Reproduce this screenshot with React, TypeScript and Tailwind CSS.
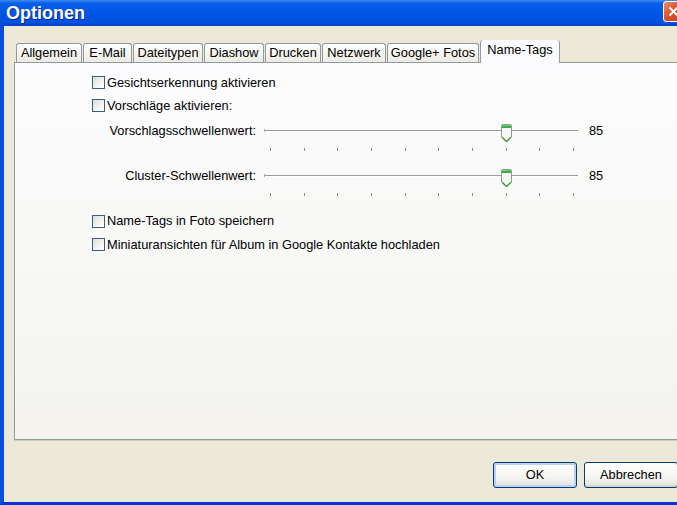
import React from 'react';

const tabs = [
  { label: 'Allgemein', w: 'w-[66px]' },
  { label: 'E-Mail', w: 'w-[49px]' },
  { label: 'Dateitypen', w: 'w-[70px]' },
  { label: 'Diashow', w: 'w-[60px]' },
  { label: 'Drucken', w: 'w-[56px]' },
  { label: 'Netzwerk', w: 'w-[64px]' },
  { label: 'Google+ Fotos', w: 'w-[92px]' },
];

function Checkbox({ label, tall }: { label: string; tall?: boolean }) {
  return (
    <div className={`flex ${tall ? 'h-[24px]' : 'h-[23px]'} items-center pl-[77px]`}>
      <div className="h-[13px] w-[13px] shrink-0 border border-[#3f5c7c] bg-[linear-gradient(135deg,#dcdcd7_0%,#f4f4f1_60%,#ffffff_100%)]" />
      <span className="ml-[2px]">{label}</span>
    </div>
  );
}

function Thumb() {
  return (
    <svg width="11" height="19" viewBox="0 0 11 19">
      <path
        d="M1.5 0.5 H9.5 Q10.5 0.5 10.5 1.5 V13 L5.5 18 L0.5 13 V1.5 Q0.5 0.5 1.5 0.5 Z"
        fill="#f6f6f2"
        stroke="#8d999b"
      />
      <rect x="1" y="1" width="9" height="3" fill="#3aad3a" />
      <rect x="1" y="1" width="9" height="1" fill="#6fd06f" />
      <path d="M1.2 13.2 L5.5 17.4 L9.8 13.2" fill="none" stroke="#2f9f2f" strokeWidth="1.2" />
    </svg>
  );
}

function Slider({ label, value }: { label: string; value: number }) {
  return (
    <div className="flex h-[45px] items-start">
      <div className="mt-[5px] h-[18px] w-[241px] text-right leading-[18px]">{label}</div>
      <div className="relative ml-[8px] h-[45px] w-[314px]">
        <div className="absolute left-0 right-0 top-[13px] h-[1px] bg-[#9a9a96]" />
        <div className="absolute left-0 right-0 top-[14px] h-[1px] bg-[#ffffff]" />
        <div className="absolute left-0 top-[12px] h-[3px] w-[1px] bg-[#b0b0ac]" />
        <div className="absolute left-[6px] top-[31px] flex w-[304px] justify-between">
          {Array.from({ length: 10 }).map((_, i) => (
            <div key={i} className="h-[3px] w-[1px] bg-[#8a8a86]" />
          ))}
        </div>
        <div className="absolute left-[237px] top-[7px]">
          <Thumb />
        </div>
      </div>
      <div className="ml-[11px] mt-[5px] h-[18px] leading-[18px]">{value}</div>
    </div>
  );
}

function Button({ label, isDefault, w }: { label: string; isDefault?: boolean; w: string }) {
  return (
    <div
      className={`flex h-[26px] ${w} shrink-0 items-center justify-center rounded-[3px] border border-[#003c74] bg-[linear-gradient(180deg,#ffffff_0%,#f4f4f0_60%,#e3e2da_100%)] ${
        isDefault ? 'shadow-[inset_0_0_0_2px_#b9d1f4]' : 'shadow-[inset_0_-2px_0_#d8d6cc]'
      }`}
    >
      {label}
    </div>
  );
}

export default function App() {
  return (
    <div
      className="flex h-[505px] w-[677px] flex-col overflow-hidden bg-[#ece9d8] text-[12.8px] text-black"
      style={{ fontFamily: '"Liberation Sans", Arial, sans-serif' }}
    >
      {/* Title bar */}
      <div className="flex h-[26px] shrink-0 items-center bg-[linear-gradient(180deg,#3d8cf4_0%,#0a5fe8_12%,#0055e5_50%,#0052df_85%,#0343c2_100%)]">
        <span className="ml-[6px] text-[18px] font-bold text-white [text-shadow:1px_1px_0_#0a2a8a]">
          Optionen
        </span>
        <div className="flex-1" />
        <div className="mb-[3px] mr-[-7px] flex h-[21px] w-[21px] items-center justify-center rounded-[3px] border border-white bg-[linear-gradient(135deg,#f08a66_0%,#d8502c_50%,#c0401c_100%)]">
          <svg width="11" height="11" viewBox="0 0 11 11">
            <path d="M1.5 1.5 L9.5 9.5 M9.5 1.5 L1.5 9.5" stroke="#ffffff" strokeWidth="2" />
          </svg>
        </div>
      </div>

      {/* Window body */}
      <div className="flex flex-1 border-b-[3px] border-l-[4px] border-b-[#0831d9] border-l-[#0a4ee0]">
        <div className="flex flex-1 flex-col pl-[10px] pt-[14px]">
          {/* Tabs */}
          <div className="flex h-[22px] items-end gap-[1px] pl-[2px]">
            {tabs.map((t) => (
              <div
                key={t.label}
                className={`flex h-[19px] ${t.w} items-center justify-center rounded-t-[3px] border border-b-0 border-[#919b9c] bg-[linear-gradient(180deg,#ffffff_0%,#f6f5f1_50%,#ebeae4_100%)]`}
              >
                {t.label}
              </div>
            ))}
            <div className="relative z-10 mb-[-1px] flex h-[23px] w-[80px] flex-col rounded-t-[3px] border-x border-[#919b9c] bg-[#fcfcfe]">
              <div className="h-[3px] rounded-t-[3px] bg-[linear-gradient(180deg,#e6a020_0%,#ffc73c_100%)]" />
              <div className="flex flex-1 items-center justify-center pb-[4px]">Name-Tags</div>
            </div>
          </div>

          {/* Panel */}
          <div className="flex h-[378px] w-[700px] flex-col border border-[#919b9c] bg-[linear-gradient(180deg,#fcfcfe_0%,#f8f8f6_50%,#f4f3ee_100%)] pt-[8px] shadow-[0_1px_0_#d0cec0]">
            <Checkbox label="Gesichtserkennung aktivieren" />
            <Checkbox label="Vorschläge aktivieren:" />
            <Slider label="Vorschlagsschwellenwert:" value={85} />
            <Slider label="Cluster-Schwellenwert:" value={85} />
            <div className="h-[2px]" />
            <Checkbox label="Name-Tags in Foto speichern" tall />
            <Checkbox label="Miniaturansichten für Album in Google Kontakte hochladen" />
          </div>

          {/* Buttons */}
          <div className="mt-[22px] flex gap-[7px] pl-[479px]">
            <Button label="OK" isDefault w="w-[84px]" />
            <Button label="Abbrechen" w="w-[94px]" />
          </div>
        </div>
      </div>
    </div>
  );
}
